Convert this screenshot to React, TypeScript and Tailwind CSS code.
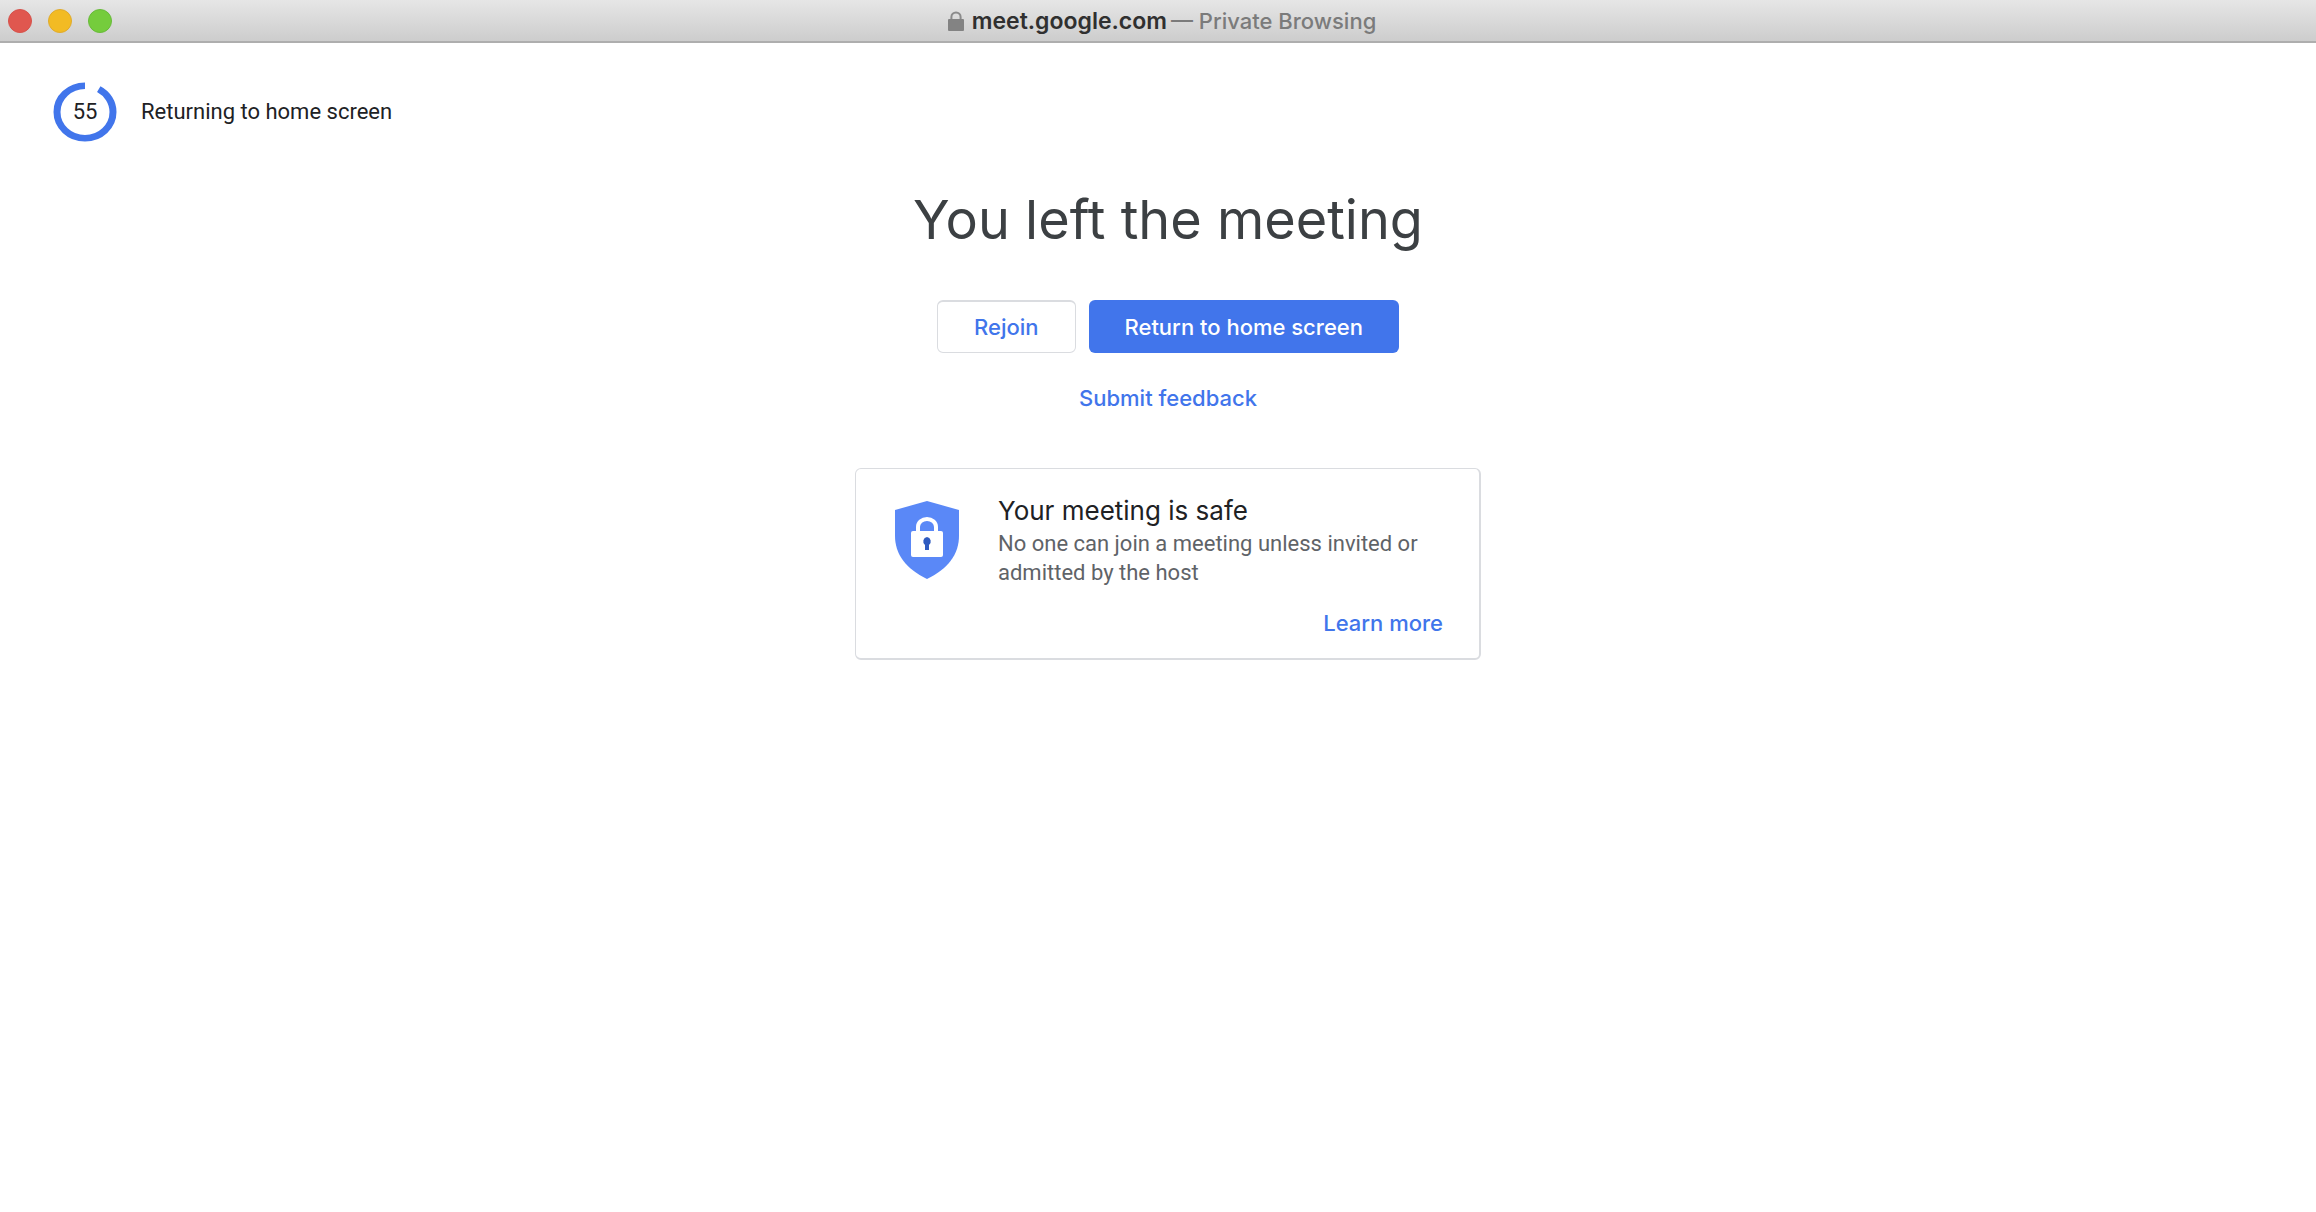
const TOTAL_SECONDS = 60;
const RADIUS = 28;
const CIRCUMFERENCE = 2 * Math.PI * RADIUS;

function TitleBar() {
  return (
    <header className="flex h-[43px] items-center border-b-2 border-[#aeaeae] bg-linear-to-b from-[#e6e6e6] to-[#cdcdcd] px-2">
      <div className="flex flex-1 gap-4">
        <button aria-label="Close" className="size-6 rounded-full border border-[#d6524b] bg-[#e0574f]" />
        <button aria-label="Minimize" className="size-6 rounded-full border border-[#e0ab2c] bg-[#f2bb24]" />
        <button aria-label="Zoom" className="size-6 rounded-full border border-[#68bb3a] bg-[#75cc3c]" />
      </div>
      <div className="flex items-center pl-2">
        <svg viewBox="0 0 16 20" className="mr-2 h-5 w-4" aria-hidden="true">
          <path d="M3.4 9V6a4.6 4.6 0 0 1 9.2 0v3" fill="none" stroke="#8b8b8b" strokeWidth="2" />
          <rect y="8" width="16" height="12" rx="1" fill="#838383" />
        </svg>
        <span className="mr-1 font-[Inter,sans-serif] text-[23px] leading-7 font-semibold text-[#303030]">meet.google.com</span>
        <span className="font-[Inter,sans-serif] text-[22px] leading-7 font-medium text-[#7b7b7b]">— Private Browsing</span>
      </div>
      <div className="flex-1" />
    </header>
  );
}

function Countdown({ seconds }: { seconds: number }) {
  const arc = (seconds / TOTAL_SECONDS) * CIRCUMFERENCE;

  return (
    <div className="flex items-center gap-6 pl-[53px] text-[#202124]">
      <div className="grid h-[60px] w-16 place-items-center">
        <svg viewBox="0 0 64 64" preserveAspectRatio="none" className="col-start-1 row-start-1 h-[60px] w-16" aria-hidden="true">
          {/* runs counterclockwise from the top */}
          <circle
            cx="32"
            cy="32"
            r={RADIUS}
            fill="none"
            stroke="#4175eb"
            strokeWidth="7"
            strokeDasharray={`${arc} ${CIRCUMFERENCE}`}
            transform="matrix(0 -1 -1 0 64 64)"
          />
        </svg>
        <span className="col-start-1 row-start-1 text-[22px] leading-7">{seconds}</span>
      </div>
      <p className="text-[22px] leading-7">Returning to home screen</p>
    </div>
  );
}

function ShieldIcon() {
  return (
    <svg viewBox="0 0 64 78" className="h-[78px] w-16 shrink-0" aria-hidden="true">
      <path d="M32 0 64 9v26c0 18-11 33-32 43C11 68 0 53 0 35V9Z" fill="#5a88f7" />
      <path d="M23 31v-5a9 8 0 0 1 18 0v5" fill="none" stroke="#fff" strokeWidth="4" />
      <rect x="16" y="30" width="32" height="26" rx="2" fill="#fff" />
      <path d="M32 36a4.500 4.500 0 0 1 2 8v5h-4v-5a4.500 4.500 0 0 1 2-8Z" fill="#2f5bc0" />
    </svg>
  );
}

function SafetyCard() {
  return (
    <section className="mt-14 w-full max-w-[626px] rounded-md border border-r-2 border-b-2 border-[#dadce0] pt-7 pr-9 pb-5 pl-[39px]">
      <div className="flex gap-[39px]">
        <div className="pt-1">
          <ShieldIcon />
        </div>
        <div>
          <h2 className="font-[Inter,sans-serif] text-[26px] leading-7 text-[#202124]">Your meeting is safe</h2>
          <p className="mt-1 text-[22px] leading-[29px] text-[#5f6368]">
            No one can join a meeting unless invited or admitted by the host
          </p>
        </div>
      </div>
      <div className="mt-[22px] text-right">
        <a href="#learn-more" className="font-[Inter,sans-serif] text-[22px] leading-7 font-medium text-[#4175eb]">
          Learn more
        </a>
      </div>
    </section>
  );
}

export default function App() {
  return (
    <div className="min-h-screen bg-white font-[Roboto,sans-serif]">
      <TitleBar />
      <main className="pt-[39px]">
        <Countdown seconds={55} />
        <div className="flex flex-col items-center pl-5">
          <h1 className="mt-[46px] font-[Inter,sans-serif] text-[54px] leading-[64px] text-[#3c4043]">You left the meeting</h1>
          <div className="mt-12 flex gap-[13px] font-[Inter,sans-serif] text-[22px] leading-7 font-medium">
            <button className="h-[53px] rounded-md border border-t-2 border-[#dadce0] px-9 text-[#4175eb]">Rejoin</button>
            <button className="h-[53px] rounded-md bg-[#4175eb] px-9 text-white">Return to home screen</button>
          </div>
          <a href="#feedback" className="mt-[31px] font-[Inter,sans-serif] text-[22px] leading-7 font-medium text-[#4175eb]">
            Submit feedback
          </a>
          <SafetyCard />
        </div>
      </main>
    </div>
  );
}
